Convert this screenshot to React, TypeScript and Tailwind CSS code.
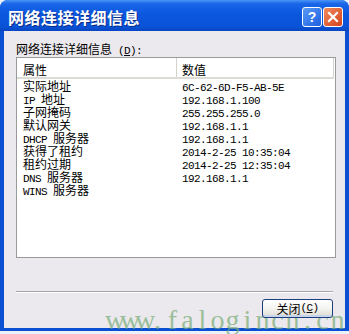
import React from "react";

const rows: [string, string][] = [
  ["实际地址", "6C-62-6D-F5-AB-5E"],
  ["IP 地址", "192.168.1.100"],
  ["子网掩码", "255.255.255.0"],
  ["默认网关", "192.168.1.1"],
  ["DHCP 服务器", "192.168.1.1"],
  ["获得了租约", "2014-2-25 10:35:04"],
  ["租约过期", "2014-2-25 12:35:04"],
  ["DNS 服务器", "192.168.1.1"],
  ["WINS 服务器", ""],
];

// ascii runs get the narrow mono face, CJK stays in Noto
function Mixed({ text }: { text: string }) {
  const parts = text.match(/[\x00-\x7F]+|[^\x00-\x7F]+/g) ?? [];
  return (
    <>
      {parts.map((p, i) =>
        /^[\x00-\x7F]+$/.test(p) ? (
          <span
            key={i}
            className="font-['Liberation_Mono',monospace] text-[11px] tracking-[-0.6px] whitespace-pre"
          >
            {p}
          </span>
        ) : (
          <span key={i}>{p}</span>
        )
      )}
    </>
  );
}

const watermark = "www.falogincn.cn";

export default function App() {
  return (
    <div className="relative w-[349px] h-[334px] overflow-hidden bg-[#eaf1f9] font-['Noto_Sans_CJK_SC',sans-serif] text-black">
      {/* site watermark, sits under the close button */}
      <div className="absolute z-10 left-[105px] top-[306px] flex text-[28px] leading-[28px] text-[#78ad78] opacity-70 font-['Liberation_Serif',serif] pointer-events-none">
        {watermark.split("").map((c, i) => (
          <span key={i} className="w-[15px] text-center inline-block">
            {c}
          </span>
        ))}
      </div>

      <div className="h-[331px] flex flex-col rounded-t-[8px] overflow-hidden bg-[#0b50d2]">
        {/* title bar */}
        <div className="h-[31px] flex items-center pl-[8px] pr-[6px] pt-[3px] bg-[linear-gradient(to_bottom,#4a95f7_0%,#1a66e8_12%,#0b57de_45%,#0a53d8_85%,#0846c2_100%)]">
          <span className="text-white font-bold text-[16px] leading-[18px] tracking-[0.5px] [text-shadow:1px_1px_0_#0d2c86]">
            网络连接详细信息
          </span>
          <div className="ml-auto flex gap-[1px]">
            <div className="w-[20px] h-[20px] rounded-[3px] border border-white bg-[linear-gradient(135deg,#5b9bf8,#1b5fe0)] flex items-center justify-center text-white font-bold text-[14px] leading-none font-['Liberation_Sans',sans-serif]">
              ?
            </div>
            <div className="w-[20px] h-[20px] rounded-[3px] border border-white bg-[linear-gradient(135deg,#f08a5e,#d4431b)] flex items-center justify-center">
              <svg width="12" height="12" viewBox="0 0 12 12">
                <path d="M2 2 L10 10 M10 2 L2 10" stroke="white" strokeWidth="2.2" strokeLinecap="square" />
              </svg>
            </div>
          </div>
        </div>

        {/* client area */}
        <div className="flex-1 mx-[4px] mb-[3px] bg-[#ebe9ed] flex flex-col">
          <div className="mt-[11px] ml-[12px] h-[14px] text-[12px] leading-[14px] whitespace-pre">
            网络连接详细信息
            <span className="font-['Liberation_Mono',monospace] text-[11px] tracking-[-0.6px]">
              {" ("}
              <span className="underline">D</span>
              {"):"}
            </span>
          </div>

          <div className="ml-[12px] mt-[1px] w-[320px] h-[201px] border border-[#9a9a9a] bg-white flex flex-col">
            <div className="h-[21px] flex border-b-[2px] border-[#dddbd6] text-[12px] leading-[13px] mr-[1px]">
              <div className="w-[160px] pl-[6px] pt-[5px] border-r border-[#d4d2cc]">属性</div>
              <div className="flex-1 pl-[5px] pt-[5px] border-r border-[#d4d2cc]">数值</div>
            </div>
            {rows.map(([k, v]) => (
              <div key={k} className="h-[13px] flex text-[12px] leading-[13px]">
                <div className="w-[160px] pl-[6px] whitespace-pre">
                  <Mixed text={k} />
                </div>
                <div className="flex-1 pl-[5px] whitespace-pre">
                  <Mixed text={v} />
                </div>
              </div>
            ))}
          </div>

          <div className="mt-[33px] ml-[12px] w-[317px] border-t border-[#a6a5a9] border-b border-b-white" />

          <div className="mt-[6px] flex justify-end pr-[12px]">
            <button className="relative z-20 w-[71px] h-[19px] rounded-[3px] border border-[#1c3f80] bg-[linear-gradient(to_bottom,#ffffff_0%,#f3f3ef_50%,#dcdad2_100%)] shadow-[inset_0_-2px_0_#c8d4ea,inset_0_1px_0_#ffffff] flex items-center justify-center text-[12px] leading-[13px]">
              关闭
              <span className="font-['Liberation_Mono',monospace] text-[11px] tracking-[-0.6px]">
                (<span className="underline">C</span>)
              </span>
            </button>
          </div>
        </div>
      </div>
    </div>
  );
}
